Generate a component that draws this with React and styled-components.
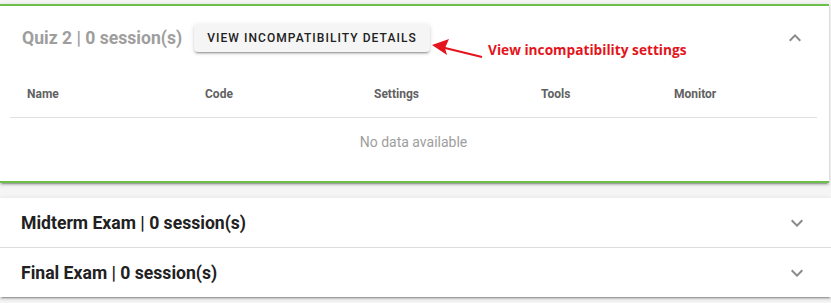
import React from "react";
import styled, { createGlobalStyle } from "styled-components";

const Global = createGlobalStyle`
  html, body { margin: 0; padding: 0; }
  body {
    background: #f5f5f5;
    font-family: Roboto, "Liberation Sans", sans-serif;
    width: 831px;
    height: 303px;
    overflow: hidden;
  }
`;

const Page = styled.div`
  padding-top: 4px;
  display: flex;
  flex-direction: column;
`;

const ActivePanel = styled.section`
  position: relative;
  background: #fff;
  border-top: 2px solid #6cc04a;
  border-bottom: 2px solid #6cc04a;
  margin-right: 2px;
  box-shadow: 0 3px 1px -2px rgba(0,0,0,.2), 0 2px 2px 0 rgba(0,0,0,.14), 0 1px 5px 0 rgba(0,0,0,.12);
`;

const Header = styled.div`
  display: flex;
  align-items: center;
  height: ${p => p.$h}px;
  padding: 0 22px 0 ${p => p.$pl}px;
  border-top: ${p => (p.$divider ? "1px solid #dcdcdc" : "none")};
`;

const Title = styled.div`
  font-size: 17.6px;
  font-weight: 700;
  color: ${p => (p.$muted ? "#9e9e9e" : "#212121")};
  white-space: nowrap;
`;

const Button = styled.button`
  margin-left: 12px;
  height: 28px;
  padding: 0 13px;
  border: none;
  border-radius: 4px;
  background: #f5f5f5;
  color: #212121;
  font-family: Roboto, "Liberation Sans", sans-serif;
  font-size: 12px;
  font-weight: 500;
  letter-spacing: 1.07px;
  text-transform: uppercase;
  box-shadow: 0 3px 1px -2px rgba(0,0,0,.2), 0 2px 2px 0 rgba(0,0,0,.14), 0 1px 5px 0 rgba(0,0,0,.12);
`;

const Spacer = styled.div`
  flex: 1;
`;

const Chevron = styled.svg`
  width: 24px;
  height: 24px;
  fill: #8a8a8a;
  flex: none;
`;

const Body = styled.div`
  padding: 0 12px 15px 10px;
`;

const Row = styled.div`
  display: grid;
  grid-template-columns: 178px 169px 167px 133px 1fr;
  height: 47px;
  align-items: center;
  border-bottom: 1px solid #e0e0e0;
`;

const HeadCell = styled.div`
  padding-left: 17px;
  font-size: 12px;
  font-weight: 700;
  color: #616161;
`;

const Empty = styled.div`
  height: 48px;
  display: flex;
  align-items: center;
  justify-content: center;
  font-size: 14px;
  color: #9e9e9e;
`;

const Stack = styled.div`
  margin-top: 15px;
  background: #fff;
  box-shadow: 0 3px 1px -2px rgba(0,0,0,.2), 0 2px 2px 0 rgba(0,0,0,.14), 0 1px 5px 0 rgba(0,0,0,.12);
`;

const Annotation = styled.div`
  position: absolute;
  left: 429px;
  top: 30px;
  display: flex;
  align-items: flex-end;
  pointer-events: none;
`;

const Note = styled.span`
  margin-left: 4px;
  font-family: "Open Sans", "Noto Sans", sans-serif;
  font-size: 13.7px;
  font-weight: 700;
  color: #e3141c;
  line-height: 20px;
  white-space: nowrap;
`;

const up = "M7.41,15.41L12,10.83L16.59,15.41L18,14L12,8L6,14L7.41,15.41Z";
const down = "M7.41,8.58L12,13.17L16.59,8.58L18,10L12,16L6,10L7.41,8.58Z";

const columns = ["Name", "Code", "Settings", "Tools", "Monitor"];

export default function App() {
  return (
    <>
      <Global />
      <Page>
        <ActivePanel>
          <Header $h={64} $pl={22}>
            <Title $muted>Quiz 2 | 0 session(s)</Title>
            <Button>View incompatibility details</Button>
            <Spacer />
            <Chevron viewBox="0 0 24 24"><path d={up} /></Chevron>
          </Header>
          <Body>
            <Row>
              {columns.map(c => (
                <HeadCell key={c}>{c}</HeadCell>
              ))}
            </Row>
            <Empty>No data available</Empty>
          </Body>
          <Annotation>
            <svg width="55" height="24" viewBox="0 0 55 24">
              <line x1="12" y1="11" x2="53" y2="21" stroke="#e3141c" strokeWidth="2" />
              <polygon points="3,9 20,3 16,12 18,19" fill="#e3141c" />
            </svg>
            <Note>View incompatibility settings</Note>
          </Annotation>
        </ActivePanel>
        <Stack>
          <Header $h={49} $pl={21}>
            <Title>Midterm Exam | 0 session(s)</Title>
            <Spacer />
            <Chevron viewBox="0 0 24 24"><path d={down} /></Chevron>
          </Header>
          <Header $h={49} $pl={21} $divider>
            <Title>Final Exam | 0 session(s)</Title>
            <Spacer />
            <Chevron viewBox="0 0 24 24"><path d={down} /></Chevron>
          </Header>
        </Stack>
      </Page>
    </>
  );
}
